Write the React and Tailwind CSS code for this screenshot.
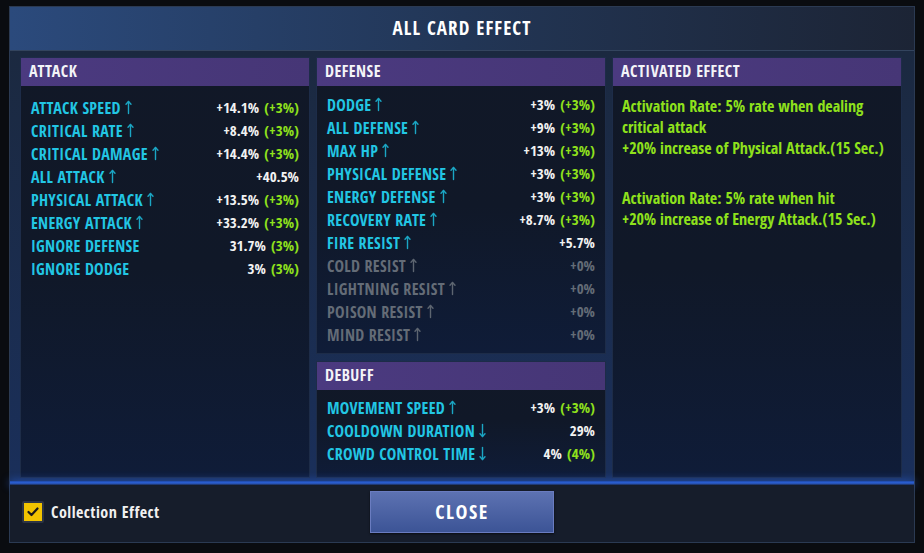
import React from "react";

const F = "font-['Noto_Sans_Condensed','Open_Sans_Condensed','Roboto_Condensed',Roboto,sans-serif]";

function Arrow({ down, grey }) {
  return (
    <svg width="7" height="15" viewBox="0 0 7 15" className="ml-[4px] shrink-0" fill="none">
      <g stroke={grey ? "#5d6570" : "#1ba6c4"} strokeWidth="1.4" strokeLinecap="round" strokeLinejoin="round">
        {down ? (
          <>
            <path d="M3.5 1.5V13.5" />
            <path d="M1 10.8L3.5 13.5L6 10.8" />
          </>
        ) : (
          <>
            <path d="M3.5 13.5V1.5" />
            <path d="M1 4.2L3.5 1.5L6 4.2" />
          </>
        )}
      </g>
    </svg>
  );
}

function Row({ label, arrow, value, bonus, grey }) {
  return (
    <div className="flex h-[23px] items-center justify-between">
      <div className={`flex items-center text-[16px] tracking-[0.3px] ${grey ? "text-[#646c77]" : "text-[#22c6e4]"}`}>
        <span>{label}</span>
        {arrow && <Arrow down={arrow === "down"} grey={grey} />}
      </div>
      <div className="flex items-center text-[15px]">
        <span className={grey ? "text-[#646c77]" : "text-[#f2f2f2]"}>{value}</span>
        {bonus && <span className="ml-[5px] text-[#8fe11c]">{bonus}</span>}
      </div>
    </div>
  );
}

function Panel({ title, children, className = "", bodyClass = "" }) {
  return (
    <div className={`flex flex-col border border-[#1d2c48] bg-gradient-to-b from-[#111827] via-[#101828] to-[#0f1c38] ${className}`}>
      <div className="flex h-[28px] shrink-0 items-center bg-gradient-to-r from-[#4b3a80] to-[#463676] pb-[3px] pl-[8px] text-[16px] font-bold tracking-[0.5px] text-[#f4f4f8]">
        {title}
      </div>
      <div className={bodyClass}>{children}</div>
    </div>
  );
}

const attack = [
  ["ATTACK SPEED", "up", "+14.1%", "(+3%)"],
  ["CRITICAL RATE", "up", "+8.4%", "(+3%)"],
  ["CRITICAL DAMAGE", "up", "+14.4%", "(+3%)"],
  ["ALL ATTACK", "up", "+40.5%", null],
  ["PHYSICAL ATTACK", "up", "+13.5%", "(+3%)"],
  ["ENERGY ATTACK", "up", "+33.2%", "(+3%)"],
  ["IGNORE DEFENSE", null, "31.7%", "(3%)"],
  ["IGNORE DODGE", null, "3%", "(3%)"],
];

const defense = [
  ["DODGE", "up", "+3%", "(+3%)"],
  ["ALL DEFENSE", "up", "+9%", "(+3%)"],
  ["MAX HP", "up", "+13%", "(+3%)"],
  ["PHYSICAL DEFENSE", "up", "+3%", "(+3%)"],
  ["ENERGY DEFENSE", "up", "+3%", "(+3%)"],
  ["RECOVERY RATE", "up", "+8.7%", "(+3%)"],
  ["FIRE RESIST", "up", "+5.7%", null],
  ["COLD RESIST", "up", "+0%", null, true],
  ["LIGHTNING RESIST", "up", "+0%", null, true],
  ["POISON RESIST", "up", "+0%", null, true],
  ["MIND RESIST", "up", "+0%", null, true],
];

const debuff = [
  ["MOVEMENT SPEED", "up", "+3%", "(+3%)"],
  ["COOLDOWN DURATION", "down", "29%", null],
  ["CROWD CONTROL TIME", "down", "4%", "(4%)"],
];

export default function App() {
  return (
    <div className={`h-[553px] w-[924px] overflow-hidden bg-[#0a0c10] pl-[9px] pt-[6px] ${F}`}>
      <div className="flex h-[537px] w-[906px] flex-col border border-[#2b3a52] bg-[#1a2740]">
        {/* title bar */}
        <div className="flex h-[44px] shrink-0 items-center justify-center border-b border-[#33445e] bg-gradient-to-r from-[#2b4a7c] via-[#223656] to-[#1c2435]">
          <span className="text-[19px] font-bold tracking-[1.1px] text-white">ALL CARD EFFECT</span>
        </div>
        {/* content */}
        <div className="flex h-[430px] shrink-0 gap-[6px] bg-gradient-to-b from-[#1b2940] to-[#1a2f5a] pl-[10px] pr-[11px] pt-[6px]">
          <Panel title="ATTACK" className="h-[421px] w-[290px]" bodyClass="px-[10px] pt-[10px] font-bold">
            {attack.map((r) => (
              <Row key={r[0]} label={r[0]} arrow={r[1]} value={r[2]} bonus={r[3]} />
            ))}
          </Panel>
          <div className="flex w-[290px] flex-col gap-[7px]">
            <Panel title="DEFENSE" className="h-[297px]" bodyClass="px-[10px] pt-[7px] font-bold">
              {defense.map((r) => (
                <Row key={r[0]} label={r[0]} arrow={r[1]} value={r[2]} bonus={r[3]} grey={r[4]} />
              ))}
            </Panel>
            <Panel title="DEBUFF" className="h-[117px]" bodyClass="px-[10px] pt-[6px] font-bold">
              {debuff.map((r) => (
                <Row key={r[0]} label={r[0]} arrow={r[1]} value={r[2]} bonus={r[3]} />
              ))}
            </Panel>
          </div>
          <Panel title="ACTIVATED EFFECT" className="h-[421px] w-[290px]" bodyClass="pl-[9px] pr-[4px] pt-[10px] text-[16px] font-bold leading-[21px] text-[#8fe11c]">
            <p>
              Activation Rate: 5% rate when dealing
              <br />
              critical attack
              <br />
              +20% increase of Physical Attack.(15 Sec.)
            </p>
            <p className="mt-[29px]">
              Activation Rate: 5% rate when hit
              <br />
              +20% increase of Energy Attack.(15 Sec.)
            </p>
          </Panel>
        </div>
        {/* glow line */}
        <div className="h-[4px] shrink-0 bg-gradient-to-b from-[#1f4aa8] via-[#2d63dc] to-[#1a2c55] shadow-[0_0_8px_#2a5fd0]" />
        {/* footer */}
        <div className="grid flex-1 grid-cols-[1fr_auto_1fr] items-center bg-[#161d2b] pb-[4px]">
          <div className="ml-[12px] flex items-center">
            <div className="flex h-[22px] w-[22px] items-center justify-center rounded-[2px] border-2 border-[#2e3544] bg-[#f2c400]">
              <svg width="12" height="10" viewBox="0 0 12 10" fill="none">
                <path d="M1.5 5L4.5 8L10.5 1.5" stroke="#1a1a1a" strokeWidth="2.2" strokeLinecap="round" strokeLinejoin="round" />
              </svg>
            </div>
            <span className="ml-[7px] text-[16px] font-bold tracking-[0.5px] text-[#f0f0f0]">Collection Effect</span>
          </div>
          <div className="flex h-[42px] w-[184px] items-center justify-center border border-[#6a7cc0] bg-gradient-to-b from-[#5d72b2] to-[#3c5496] shadow-[0_1px_2px_rgba(0,0,0,0.6)]">
            <span className="text-[20px] font-bold tracking-[1.5px] text-white">CLOSE</span>
          </div>
          <div />
        </div>
      </div>
    </div>
  );
}
